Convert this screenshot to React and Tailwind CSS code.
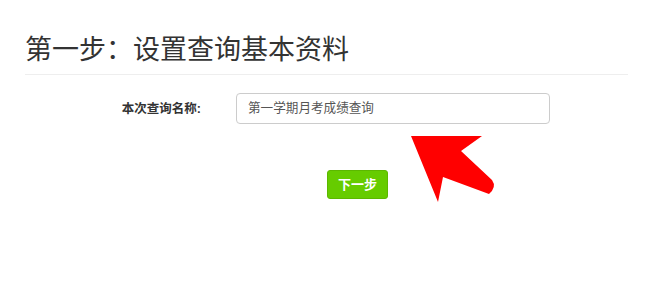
export default function App() {
  const font = { fontFamily: '"Liberation Sans", "Noto Sans CJK SC", sans-serif' };
  return (
    <div className="w-[654px] h-[281px] bg-white relative overflow-hidden" style={font}>
      <div className="pl-[25px] pr-[26px] pt-[31px]">
        <h1 className="text-[27px] leading-[38px] text-[#333] font-normal pb-[5px] border-b border-[#eee]">
          第一步：设置查询基本资料
        </h1>
        <div className="flex items-center mt-[18px]">
          <label className="w-[176px] text-right text-[12.5px] font-bold text-[#333] leading-[20px]">
            本次查询名称:
          </label>
          <div className="ml-[35px] w-[314px] h-[31px] border border-[#ccc] rounded-[4px] flex items-center pl-[11px] text-[12.6px] text-[#555]">
            第一学期月考成绩查询
          </div>
        </div>
        <div className="flex justify-start mt-[46px] pl-[302px]">
          <button className="w-[61px] h-[29px] bg-[#66cc00] border border-[#5cb800] rounded-[3px] text-white text-[13px] font-bold flex items-center justify-center">
            下一步
          </button>
        </div>
      </div>
      <svg className="absolute left-0 top-0" width="654" height="281" viewBox="0 0 654 281">
        <path
          d="M411 136 L482 136 L461 151 L492 180 Q497 187 489 194 L443 177 L438 202 Z"
          fill="#ff0000"
        />
      </svg>
    </div>
  );
}
